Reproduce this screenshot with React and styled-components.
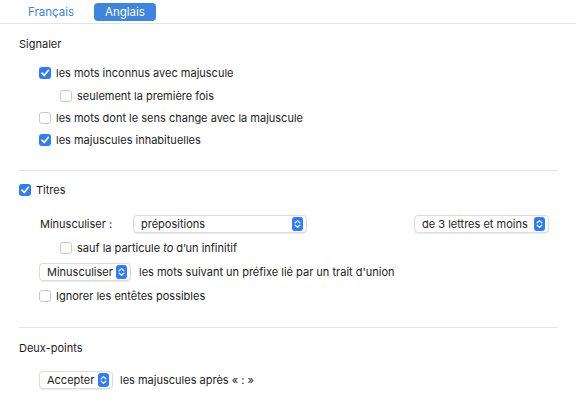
import React from "react"
import styled, { createGlobalStyle } from "styled-components"

const GlobalStyle = createGlobalStyle`
  body {
    margin: 0;
    background: #ffffff;
    font-family: "Inter", "Liberation Sans", sans-serif;
    font-size: 11px;
    color: #1c1c1c;
  }
`

const Page = styled.div`
  width: 576px;
  height: 403px;
  overflow: hidden;
  background: #ffffff;
`

const TabBar = styled.div`
  height: 23px;
  border-bottom: 1px solid #e3e3e3;
  display: flex;
  align-items: center;
  padding-left: 17px;
  gap: 9px;
`

const Tab = styled.div`
  height: 18px;
  padding: 0 11px;
  display: flex;
  align-items: center;
  border-radius: 4px;
  font-size: 11.5px;
  color: ${(p) => (p.active ? "#ffffff" : "#3c82d8")};
  background: ${(p) => (p.active ? "#3d85e0" : "transparent")};
`

const Section = styled.div`
  margin: 0 18px 0 19px;
  padding: ${(p) => p.pad || "0"};
  border-bottom: ${(p) => (p.last ? "none" : "1px solid #e3e3e3")};
  display: flex;
  flex-direction: column;
`

const Heading = styled.div`
  height: 16px;
  line-height: 16px;
  margin-bottom: ${(p) => p.mb || "0"};
`

const Row = styled.div`
  height: 22px;
  display: flex;
  align-items: center;
  padding-left: ${(p) => p.indent || 0}px;
  margin-top: ${(p) => p.mt || 0}px;
`

const Box = styled.span`
  width: 12px;
  height: 12px;
  box-sizing: border-box;
  border-radius: 3px;
  flex-shrink: 0;
  margin-right: 5px;
  display: flex;
  align-items: center;
  justify-content: center;
  background: ${(p) => (p.checked ? "#2e7cf6" : "#ffffff")};
  border: ${(p) => (p.checked ? "none" : "1px solid #c9c9c9")};
`

const Label = styled.span`
  white-space: nowrap;
`

const Popup = styled.div`
  height: 18px;
  box-sizing: border-box;
  width: ${(p) => p.w}px;
  border: 1px solid #dcdcdc;
  border-radius: 4px;
  box-shadow: 0 0.5px 1px rgba(0, 0, 0, 0.08);
  background: #ffffff;
  display: flex;
  align-items: center;
  padding: 0 3px 0 7px;
  margin-right: ${(p) => p.mr || 0}px;
`

const PopupText = styled.span`
  flex: 1;
  white-space: nowrap;
`

const Stepper = styled.span`
  width: 11px;
  height: 14px;
  flex-shrink: 0;
  border-radius: 3px;
  background: #2e7cf6;
  display: flex;
  align-items: center;
  justify-content: center;
`

const FieldLabel = styled.span`
  width: 93px;
  white-space: nowrap;
`

const Spacer = styled.div`
  flex: 1;
`

function Check({ checked }) {
  return (
    <Box checked={checked}>
      {checked && (
        <svg width='10' height='10' viewBox='0 0 10 10'>
          <path d='M2 5.2 L4.2 7.5 L8.2 2.5' fill='none' stroke='#fff' strokeWidth='1.8' strokeLinecap='round' strokeLinejoin='round' />
        </svg>
      )}
    </Box>
  )
}

function Select({ value, w, mr }) {
  return (
    <Popup w={w} mr={mr}>
      <PopupText>{value}</PopupText>
      <Stepper>
        <svg width='7' height='10' viewBox='0 0 7 10'>
          <path d='M1.2 3.8 L3.5 1.6 L5.8 3.8 M1.2 6.2 L3.5 8.4 L5.8 6.2' fill='none' stroke='#fff' strokeWidth='1.3' strokeLinecap='round' strokeLinejoin='round' />
        </svg>
      </Stepper>
    </Popup>
  )
}

export default function App() {
  return (
    <Page>
      <GlobalStyle />
      <TabBar>
        <Tab>Français</Tab>
        <Tab active>Anglais</Tab>
      </TabBar>

      <Section pad='12px 0 19px 0'>
        <Heading mb='10px'>Signaler</Heading>
        <Row indent={20}>
          <Check checked />
          <Label>les mots inconnus avec majuscule</Label>
        </Row>
        <Row indent={41} mt={1}>
          <Check />
          <Label>seulement la première fois</Label>
        </Row>
        <Row indent={20}>
          <Check />
          <Label>les mots dont le sens change avec la majuscule</Label>
        </Row>
        <Row indent={20}>
          <Check checked />
          <Label>les majuscules inhabituelles</Label>
        </Row>
      </Section>

      <Section pad='8px 0 20px 0'>
        <Row>
          <Check checked />
          <Label>Titres</Label>
        </Row>
        <Row indent={21} mt={12}>
          <FieldLabel>Minusculiser :</FieldLabel>
          <Select value='prépositions' w={174} />
          <Spacer />
          <Select value='de 3 lettres et moins' w={135} mr={9} />
        </Row>
        <Row indent={41} mt={2}>
          <Check />
          <Label>
            sauf la particule <i>to</i> d’un infinitif
          </Label>
        </Row>
        <Row indent={20} mt={2}>
          <Select value='Minusculiser' w={92} mr={8} />
          <Label>les mots suivant un préfixe lié par un trait d'union</Label>
        </Row>
        <Row indent={20} mt={2}>
          <Check />
          <Label>Ignorer les entêtes possibles</Label>
        </Row>
      </Section>

      <Section pad='12px 0 0 0' last>
        <Heading mb='13px'>Deux-points</Heading>
        <Row indent={20}>
          <Select value='Accepter' w={74} mr={7} />
          <Label>les majuscules après « : »</Label>
        </Row>
      </Section>
    </Page>
  )
}
